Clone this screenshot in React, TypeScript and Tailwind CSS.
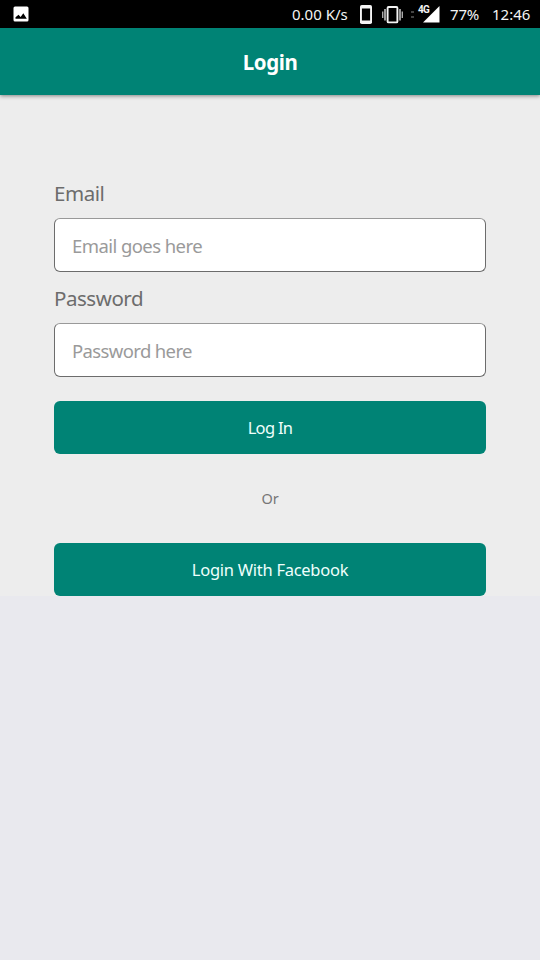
import React from 'react';

function StatusBar() {
  return (
    <div className="flex h-7 items-center bg-black pl-[13px] pr-[10px] text-[15px] leading-7 text-[#f4f4f4]">
      <svg className="h-4 w-4" viewBox="0 0 16 16">
        <rect x="0.5" y="0.5" width="15" height="15" rx="1.5" fill="#fff" />
        <path d="M2.5 12.8V11.3L5.5 8.7 7.6 11 10.3 7.3 13.8 12.8Z" fill="#000" />
      </svg>
      <span className="ml-auto w-[68px] whitespace-nowrap">0.00 K/s</span>
      <svg className="h-7 w-3" viewBox="0 0 12 28">
        <rect x="0" y="5" width="12" height="19" rx="1.8" fill="#f4f4f4" />
        <rect x="1.9" y="8.5" width="8.2" height="12" fill="#000" />
      </svg>
      <svg className="ml-[9px] h-7 w-[23px]" viewBox="0 0 23 28">
        <rect x="6.6" y="7" width="9.8" height="15.4" rx="1" fill="none" stroke="#f4f4f4" strokeWidth="1.9" />
        <path d="M4 9v11.5M19 9v11.5" stroke="#aaa" strokeWidth="1.8" />
        <path d="M1.7 11.5v6.5M21.3 11.5v6.5" stroke="#aaa" strokeWidth="1.4" />
      </svg>
      <svg className="ml-[7px] h-7 w-[3px]" viewBox="0 0 3 28">
        <path d="M0 11h3v2H0zM0 16h3v2H0z" fill="#444" />
      </svg>
      <div className="relative ml-[3px] h-7 w-[23px]">
        <svg className="h-7 w-[23px]" viewBox="0 0 23 28">
          <path d="M22.5 6v16.5H6Z" fill="#fff" />
          <path d="M0 3.5h12.5v11H0z" fill="#000" />
        </svg>
        <span className="absolute left-[1px] top-[4px] font-['Roboto'] text-[10px] font-bold leading-3 tracking-[-0.8px]">4G</span>
      </div>
      <span className="ml-[10px] w-[42px] tracking-[-0.2px]">77%</span>
      <span className="w-[38px] whitespace-nowrap">12:46</span>
    </div>
  );
}

function Field({ label, placeholder, type, inputClass }: {
  label: string; placeholder: string; type: string; inputClass: string;
}) {
  return (
    <label className="flex flex-col gap-[11px]">
      <span className="text-[20.5px] leading-7 tracking-[-0.45px] text-[#6c6c6c]">{label}</span>
      <input
        type={type}
        placeholder={placeholder}
        className={`h-[54px] w-full rounded-[6px] border border-[#6c6c6c] border-t-[#999] bg-white px-[17px] text-[18.5px] text-[#444] outline-none placeholder:text-[#9a9a9a] ${inputClass}`}
      />
    </label>
  );
}

function Button({ children, className }: { children: React.ReactNode; className: string }) {
  return (
    <button className={`flex h-[53px] w-full items-center justify-center rounded-[6px] bg-[#008375] pt-[2px] text-[16.5px] text-[#effffc] ${className}`}>
      {children}
    </button>
  );
}

export default function App() {
  return (
    <div className="flex h-[960px] w-[540px] flex-col overflow-hidden bg-[#e9e9ee] font-['Noto_Sans',sans-serif]">
      <StatusBar />
      <header className="z-10 flex h-[67px] items-center justify-center bg-[#008375] pt-[2px] text-[20.5px] font-bold tracking-[-0.4px] text-white shadow-[0_1px_4px_rgba(0,0,0,0.45)]">
        Login
      </header>
      <main className="flex flex-col bg-[#ededed] px-[54px] pt-[84px]">
        <div className="flex flex-col gap-3 pb-6">
          <Field label="Email" placeholder="Email goes here" type="email" inputClass="tracking-[-0.57px]" />
          <Field label="Password" placeholder="Password here" type="text" inputClass="tracking-[-0.63px]" />
        </div>
        <Button className="tracking-[-0.7px]">Log In</Button>
        <p className="flex h-[89px] items-center justify-center pt-px text-[14.5px] tracking-[-0.2px] text-[#777]">Or</p>
        <Button className="tracking-[-0.27px]">Login With Facebook</Button>
      </main>
    </div>
  );
}
